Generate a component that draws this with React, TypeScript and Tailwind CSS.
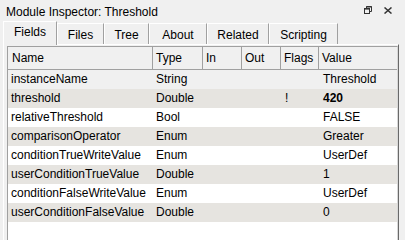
import React from 'react';

const tabs = [
  { label: 'Files', w: 'w-[47px]' },
  { label: 'Tree', w: 'w-[45px]' },
  { label: 'About', w: 'w-[58px]' },
  { label: 'Related', w: 'w-[62px]' },
  { label: 'Scripting', w: 'w-[69px]' },
];

const rows = [
  { name: 'instanceName', type: 'String', flags: '', value: 'Threshold', bg: 'bg-[#f0f0f0]' },
  { name: 'threshold', type: 'Double', flags: '!', value: '420', bg: 'bg-[#e6e4e0]', bold: true },
  { name: 'relativeThreshold', type: 'Bool', flags: '', value: 'FALSE', bg: 'bg-white' },
  { name: 'comparisonOperator', type: 'Enum', flags: '', value: 'Greater', bg: 'bg-[#e6e4e0]' },
  { name: 'conditionTrueWriteValue', type: 'Enum', flags: '', value: 'UserDef', bg: 'bg-white' },
  { name: 'userConditionTrueValue', type: 'Double', flags: '', value: '1', bg: 'bg-[#e6e4e0]' },
  { name: 'conditionFalseWriteValue', type: 'Enum', flags: '', value: 'UserDef', bg: 'bg-white' },
  { name: 'userConditionFalseValue', type: 'Double', flags: '', value: '0', bg: 'bg-[#e6e4e0]' },
];

const RestoreIcon = () => (
  <svg width="8" height="8" viewBox="0 0 8 8" className="text-[#333]">
    <path d="M2.5 2V0.5H7.5V5.5H6" fill="none" stroke="currentColor" strokeWidth="1" />
    <rect x="2.5" y="0" width="5" height="1.5" fill="currentColor" />
    <rect x="0.5" y="2.5" width="5" height="5" fill="none" stroke="currentColor" strokeWidth="1" />
    <rect x="0.5" y="2" width="5" height="1.6" fill="currentColor" />
  </svg>
);

const CloseIcon = () => (
  <svg width="8" height="7" viewBox="0 0 8 7" className="text-[#333]">
    <path d="M0.5 0.5L7.5 6.5M7.5 0.5L0.5 6.5" stroke="currentColor" strokeWidth="1.5" />
  </svg>
);

export default function App() {
  return (
    <div className="w-[405px] h-[240px] bg-[#f0f0f0] overflow-hidden flex flex-col text-[12px] text-black [font-family:'Liberation_Sans',Arial,sans-serif]">
      {/* title */}
      <div className="h-[21px] shrink-0 flex items-start pl-[6px] pr-[13px]">
        <span className="pt-[5px] leading-[14px] flex-1">Module Inspector: Threshold</span>
        <div className="flex items-center gap-[12px] pt-[6px]">
          <RestoreIcon />
          <CloseIcon />
        </div>
      </div>

      {/* tabs */}
      <div className="h-[23px] shrink-0 flex items-end pl-[3px] relative z-10">
        <div className="w-[54px] h-[24px] -mb-px bg-[#f0f0f0] border-t border-l border-r border-t-white border-l-white border-r-[#a0a0a0] flex justify-center pt-[3px] leading-[14px]">
          Fields
        </div>
        {tabs.map((t) => (
          <div
            key={t.label}
            className={`${t.w} h-[21px] border-t border-l border-r border-t-white border-l-white border-r-[#a0a0a0] flex justify-center pt-[4px] leading-[14px]`}
          >
            {t.label}
          </div>
        ))}
      </div>

      {/* pane */}
      <div className="flex-1 flex ml-[3px] mr-[6px] border-t border-l border-r border-t-white border-l-white border-r-[#696969] pl-[3px] pt-[1px]">
        <div className="flex-1 bg-white border-t border-l border-[#a0a0a0] border-r border-r-[#d8d8d8] flex flex-col">
          <div className="h-[23px] shrink-0 flex bg-[#f0f0f0] border-b border-[#a0a0a0] leading-[22px]">
            <div className="w-[145px] pl-[4px] border-r border-[#a0a0a0]">Name</div>
            <div className="w-[50px] pl-[3px] border-r border-[#a0a0a0]">Type</div>
            <div className="w-[39px] pl-[3px] border-r border-[#a0a0a0]">In</div>
            <div className="w-[39px] pl-[3px] border-r border-[#a0a0a0]">Out</div>
            <div className="w-[38px] pl-[3px] border-r border-[#a0a0a0]">Flags</div>
            <div className="flex-1 pl-[3px]">Value</div>
          </div>
          {rows.map((r) => (
            <div key={r.name} className={`h-[19px] shrink-0 flex leading-[19px] ${r.bg}`}>
              <div className="w-[145px] pl-[3px] whitespace-nowrap">{r.name}</div>
              <div className="w-[50px] pl-[3px]">{r.type}</div>
              <div className="w-[39px]" />
              <div className="w-[39px]" />
              <div className="w-[38px] pl-[4px]">{r.flags}</div>
              <div className={`flex-1 pl-[4px] ${r.bold ? 'font-bold' : ''}`}>{r.value}</div>
            </div>
          ))}
        </div>
      </div>
    </div>
  );
}
